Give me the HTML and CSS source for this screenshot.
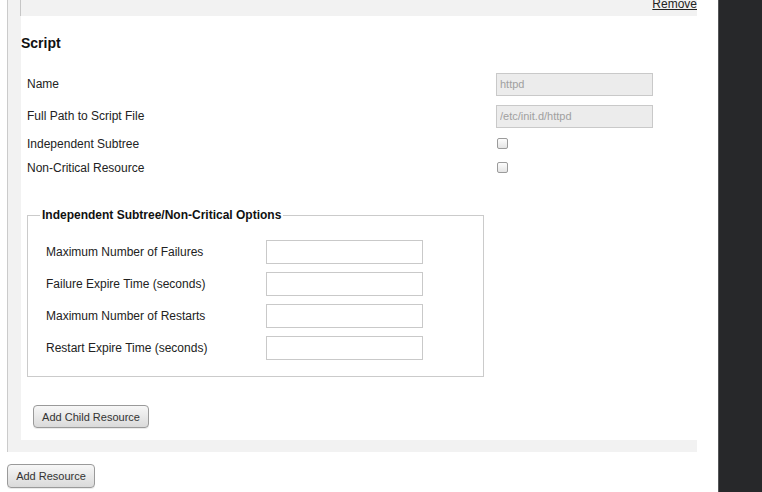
FILE: index.html
```html
<!DOCTYPE html>
<html>
<head>
<meta charset="utf-8">
<link rel="stylesheet" href="styles.css">
</head>
<body>
<div class="page">
  <div class="main">
    <div class="resource">
      <div class="prev-strip"><a class="remove" href="#">Remove</a></div>
      <div class="panel">
        <h3 class="title">Script</h3>
        <div class="form">
          <div class="row row-input"><span class="label">Name</span><input class="txt disabled" type="text" value="httpd" disabled></div>
          <div class="row row-input"><span class="label">Full Path to Script File</span><input class="txt disabled" type="text" value="/etc/init.d/httpd" disabled></div>
          <div class="row row-check1"><span class="label">Independent Subtree</span><input class="chk" type="checkbox"></div>
          <div class="row row-check2"><span class="label">Non-Critical Resource</span><input class="chk" type="checkbox"></div>
        </div>
        <fieldset class="opts">
          <legend>Independent Subtree/Non-Critical Options</legend>
          <div class="opts-grid">
            <span class="label">Maximum Number of Failures</span><input class="txt" type="text">
            <span class="label">Failure Expire Time (seconds)</span><input class="txt" type="text">
            <span class="label">Maximum Number of Restarts</span><input class="txt" type="text">
            <span class="label">Restart Expire Time (seconds)</span><input class="txt" type="text">
          </div>
        </fieldset>
        <button class="btn btn-child" type="button">Add Child Resource</button>
      </div>
    </div>
    <button class="btn btn-add" type="button">Add Resource</button>
  </div>
  <div class="sidebar"></div>
</div>
</body>
</html>
```
FILE: styles.css
```css
html, body {
  margin: 0;
  padding: 0;
  background: #ffffff;
}
body {
  font-family: "Liberation Sans", Arial, sans-serif;
  font-size: 12px;
  color: #222;
  overflow: hidden;
  height: 492px;
}
.page {
  display: flex;
  height: 492px;
}
.main {
  width: 718px;
  flex: none;
  display: flex;
  flex-direction: column;
  align-items: flex-start;
}
.sidebar {
  flex: 1;
  background: #27282a;
  border-left: 1px solid #555658;
}
.resource {
  margin-left: 7px;
  width: 677px;
  border-left: 1px solid #cbcbcb;
  background: #f2f2f2;
  padding: 0 0 12px 12px;
}
.prev-strip {
  height: 16px;
  margin-right: -6px;
  border-left: 1px solid #c6c6c6;
  display: flex;
  justify-content: flex-end;
  align-items: flex-start;
  padding-right: 6px;
}
.remove {
  color: #222;
  font-size: 12px;
  line-height: 14px;
  margin-top: -3px;
  text-decoration: underline;
}
.panel {
  margin-left: 1px;
  background: #fff;
  padding: 0 0 12px 0;
  display: flex;
  flex-direction: column;
  align-items: flex-start;
}
.title {
  margin: 19px 0 0 0;
  font-size: 14px;
  line-height: 17px;
  font-weight: bold;
  color: #111;
}
.form {
  margin-top: 16px;
  padding-left: 6px;
  display: flex;
  flex-direction: column;
}
.row {
  display: grid;
  grid-template-columns: 469px 157px;
  align-items: center;
}
.row-input { height: 32px; }
.row-check1 { height: 23px; }
.row-check2 { height: 24px; }
.row-check2 .label { margin-top: 1px; }
.label {
  font-size: 12px;
  line-height: 14px;
  color: #222;
}
.txt {
  box-sizing: border-box;
  width: 157px;
  height: 24px;
  margin: 0;
  border: 1px solid #c9c9c9;
  background: #fff;
  padding: 0 3px;
  font-family: "Liberation Sans", Arial, sans-serif;
  font-size: 11px;
  color: #999;
  outline: none;
}
.txt.disabled {
  height: 23px;
  background: #ececec;
  color: #a0a0a0;
}
.chk {
  appearance: none;
  -webkit-appearance: none;
  box-sizing: border-box;
  width: 11px;
  height: 11px;
  margin: 0 0 0 1px;
  border: 1px solid #9b9b9b;
  border-radius: 2px;
  background: linear-gradient(#fdfdfd, #e4e4e4);
}
.opts {
  margin: 29px 0 0 6px;
  width: 457px;
  box-sizing: border-box;
  border: 1px solid #cbcbcb;
  padding: 0 0 16px 18px;
}
.opts legend {
  margin-left: -6px;
  padding: 0 2px;
  font-size: 12px;
  line-height: 14px;
  font-weight: bold;
  color: #111;
}
.opts-grid {
  margin-top: 18px;
  display: grid;
  grid-template-columns: 220px 157px;
  grid-auto-rows: 24px;
  row-gap: 8px;
  align-items: center;
}
.btn {
  box-sizing: border-box;
  margin: 0;
  border: 1px solid #9a9a9a;
  border-radius: 4px;
  background: linear-gradient(#f7f7f7, #dadada);
  font-family: "Liberation Sans", Arial, sans-serif;
  font-size: 11px;
  color: #333;
  padding: 0;
  white-space: nowrap;
  text-align: center;
  box-shadow: 0 1px 0 rgba(0,0,0,0.08);
}
.btn-child {
  margin: 28px 0 0 12px;
  height: 23px;
  width: 116px;
}
.btn-add {
  margin: 12px 0 0 7px;
  height: 24px;
  width: 88px;
}
```
